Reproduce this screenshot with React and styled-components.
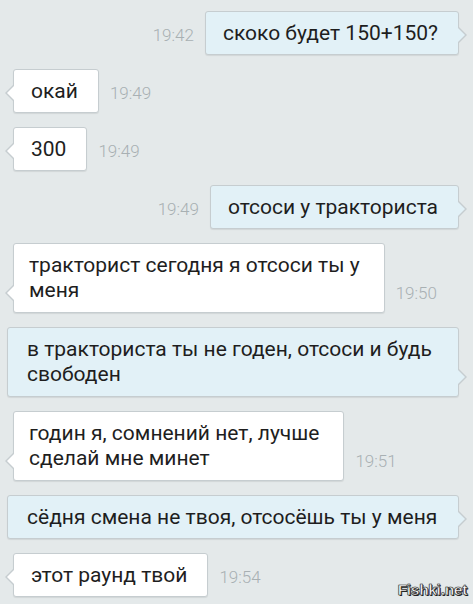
import React from 'react';
import styled, {createGlobalStyle, css} from "styled-components";

const GlobalStyle = createGlobalStyle`
html, body {
    margin: 0;
    padding: 0;
    background: #e4e9ea;
}
`

const messages = [
    {out: true, text: 'скоко будет 150+150?', time: '19:42'},
    {out: false, text: 'окай', time: '19:49'},
    {out: false, text: '300', time: '19:49'},
    {out: true, text: 'отсоси у тракториста', time: '19:49'},
    {out: false, text: 'тракторист сегодня я отсоси ты у\nменя', time: '19:50'},
    {out: true, text: 'в тракториста ты не годен, отсоси и будь\nсвободен', wide: true},
    {out: false, text: 'годин я, сомнений нет, лучше\nсделай мне минет', time: '19:51'},
    {out: true, text: 'сёдня смена не твоя, отсосёшь ты у меня', wide: true},
    {out: false, text: 'этот раунд твой', time: '19:54'},
];

const Screen = styled.div`
position: relative;
width: 473px;
height: 604px;
overflow: hidden;
box-sizing: border-box;
padding: 11px 14px 0 7px;
background: #e4e9ea;
font-family: Roboto, "Noto Sans", sans-serif;
display: flex;
flex-direction: column;
gap: 14px;
`

const Row = styled.div`
display: flex;
align-items: flex-end;
gap: 11px;
justify-content: ${p => p.$out ? 'flex-end' : 'flex-start'};
padding-left: ${p => p.$out ? '0' : '6px'};
`

const Bubble = styled.div`
position: relative;
box-sizing: border-box;
padding: 9px 20px 8px 17px;
font-size: 21px;
line-height: 25px;
color: #1e1e1e;
white-space: pre;
border: 1px solid #c6cdd0;
border-radius: 3px;
box-shadow: 0 1px 1px rgba(0, 0, 0, 0.08);
background: ${p => p.$out ? '#e2f1f7' : '#ffffff'};
${p => p.$multi && css`
    padding: 9px 24px 9px 15px;
`}
${p => p.$wide && css`
    flex: 1;
    padding-left: 19px;
    padding-right: 8px;
`}

&::before, &::after {
    content: '';
    position: absolute;
    bottom: 11px;
    width: 0;
    height: 0;
    border-top: 8px solid transparent;
    border-bottom: 8px solid transparent;
}

${p => p.$out ? css`
    &::before {
        right: -9px;
        border-left: 8px solid #c6cdd0;
    }
    &::after {
        right: -7px;
        border-left: 8px solid #e2f1f7;
    }
` : css`
    &::before {
        left: -9px;
        border-right: 8px solid #c6cdd0;
    }
    &::after {
        left: -7px;
        border-right: 8px solid #ffffff;
    }
`}
`

const Time = styled.span`
font-size: 17px;
font-weight: 300;
line-height: 20px;
color: #a8b0b3;
margin-bottom: 10px;
white-space: nowrap;
`

const Watermark = styled.div`
position: absolute;
right: 6px;
bottom: 5px;
font-family: "Liberation Sans", Arial, sans-serif;
font-weight: bold;
font-size: 15.5px;
letter-spacing: -0.3px;
color: #ffffff;
-webkit-text-stroke: 0.6px #333;
text-shadow: 0 0 1px #222, 1px 1px 0 #222;
`

const App = () => {
    return (
        <Screen>
            <GlobalStyle/>
            {messages.map((m, i) => (
                <Row key={i} $out={m.out}>
                    {m.out && m.time && <Time>{m.time}</Time>}
                    <Bubble $out={m.out} $wide={m.wide} $multi={m.text.includes('\n')}>{m.text}</Bubble>
                    {!m.out && m.time && <Time>{m.time}</Time>}
                </Row>
            ))}
            <Watermark>Fishki.net</Watermark>
        </Screen>
    )
};

export default App;
